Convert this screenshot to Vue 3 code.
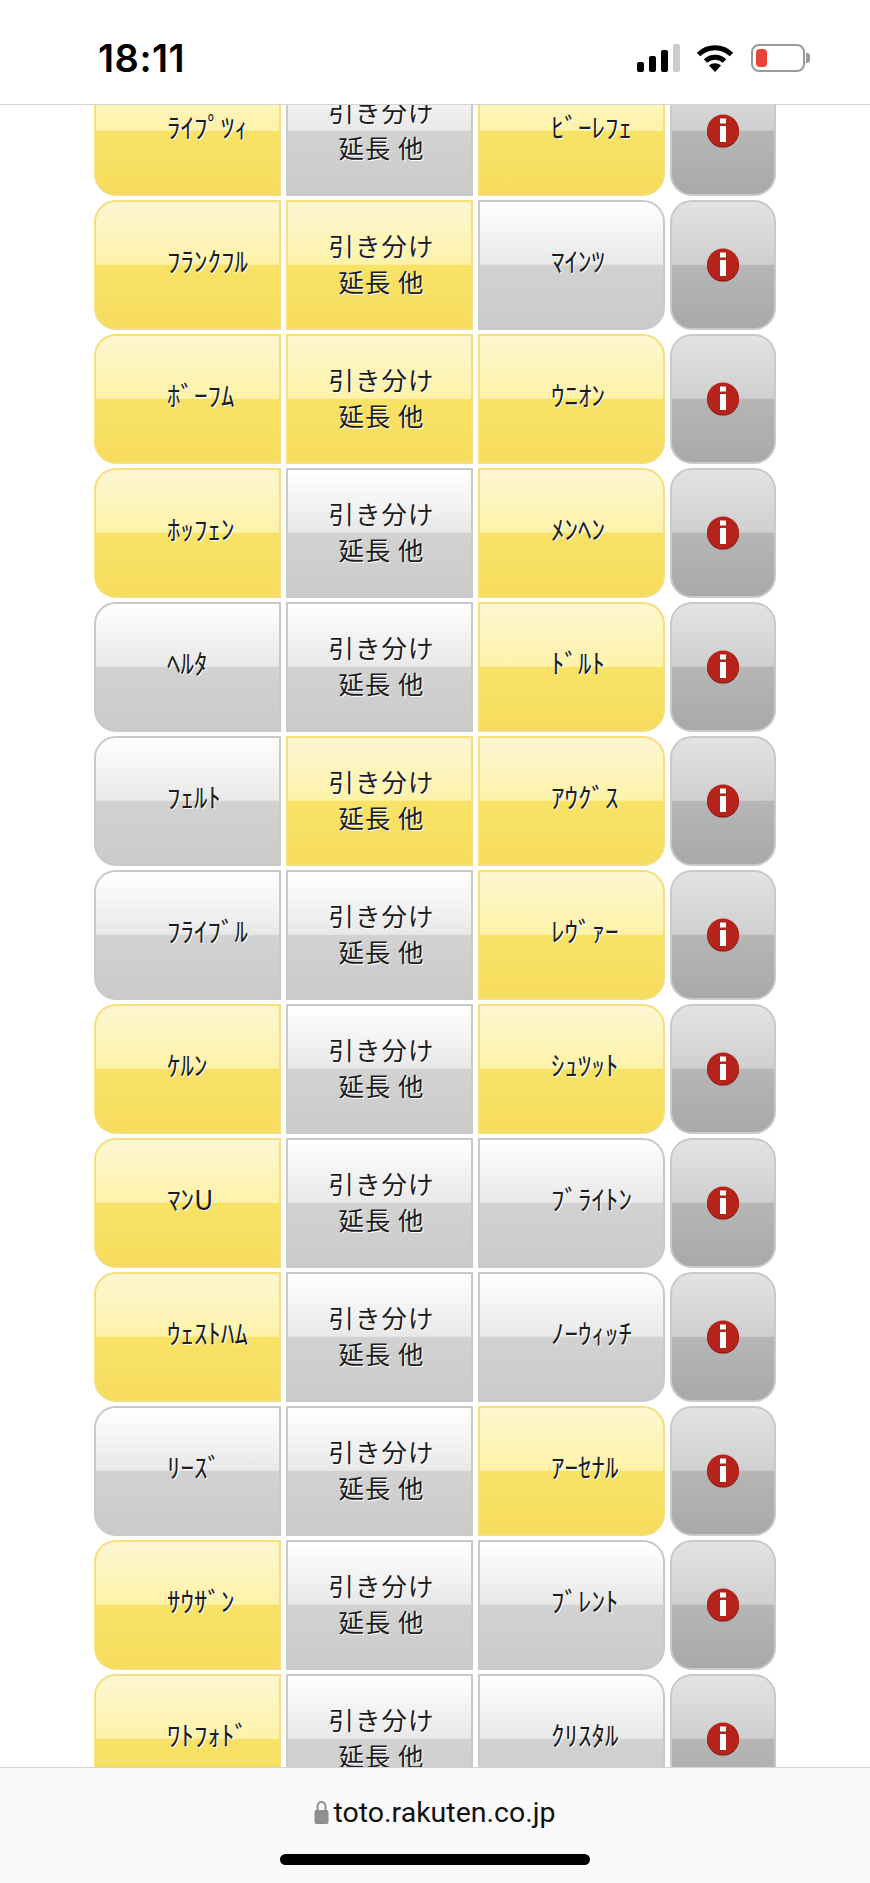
<template>
  <div class="phone">
    <!-- ステータスバー -->
    <header class="status-bar">
      <span class="time">18:11</span>
      <div class="status-icons">
        <svg class="signal" width="44" height="28" viewBox="0 0 44 28">
          <rect x="0" y="18" width="7" height="10" rx="2" fill="#000" />
          <rect x="12" y="12" width="7" height="16" rx="2" fill="#000" />
          <rect x="24" y="6" width="7" height="22" rx="2" fill="#000" />
          <rect x="36" y="0" width="7" height="28" rx="2" fill="#ccc" />
        </svg>
        <svg class="wifi" width="38" height="28" viewBox="0 0 38 28">
          <path d="M2.5 10.5 C12 1.5 26 1.5 35.5 10.5" fill="none" stroke="#000" stroke-width="5" />
          <path d="M9.5 17 C15 12 23 12 28.5 17" fill="none" stroke="#000" stroke-width="5" />
          <path d="M13 21.5 C16.5 18.5 21.5 18.5 25 21.5 L19 28 Z" fill="#000" />
        </svg>
        <div class="battery">
          <div class="battery-level"></div>
        </div>
      </div>
    </header>

    <!-- 試合リスト -->
    <main class="content">
      <div class="match-list">
        <div v-for="match in matches" :key="match.home" class="match">
          <div :class="['cell', 'team', 'home', { on: match.picks[0] }]">{{ match.home }}</div>
          <div :class="['cell', 'draw', { on: match.picks[1] }]">引き分け<br />延長 他</div>
          <div :class="['cell', 'team', 'away', { on: match.picks[2] }]">{{ match.away }}</div>
          <div class="cell info">
            <svg width="34" height="34" viewBox="0 0 34 34">
              <circle cx="17" cy="17.6" r="16" fill="#7d1a12" />
              <circle cx="17" cy="16.6" r="16" fill="#b5231a" />
              <rect x="14" y="4.5" width="6" height="5" fill="#fff" />
              <rect x="14" y="12" width="6" height="16" fill="#fff" />
            </svg>
          </div>
        </div>
      </div>
    </main>

    <!-- アドレスバー -->
    <footer class="address-bar">
      <div class="url">
        <svg width="15" height="24" viewBox="0 0 15 24">
          <path d="M3.5 11 V6.5 C3.5 0.5 11.5 0.5 11.5 6.5 V11" fill="none" stroke="#8e8e93" stroke-width="2" />
          <rect x="0.5" y="10" width="14" height="14" rx="2" fill="#8e8e93" />
        </svg>
        <span>toto.rakuten.co.jp</span>
      </div>
      <div class="home-indicator"></div>
    </footer>
  </div>
</template>

<script setup>
const matches = [
  { home: 'ﾗｲﾌﾟﾂｨ', away: 'ﾋﾞｰﾚﾌｪ', picks: [true, false, true] },
  { home: 'ﾌﾗﾝｸﾌﾙ', away: 'ﾏｲﾝﾂ', picks: [true, true, false] },
  { home: 'ﾎﾞｰﾌﾑ', away: 'ｳﾆｵﾝ', picks: [true, true, true] },
  { home: 'ﾎｯﾌｪﾝ', away: 'ﾒﾝﾍﾝ', picks: [true, false, true] },
  { home: 'ﾍﾙﾀ', away: 'ﾄﾞﾙﾄ', picks: [false, false, true] },
  { home: 'ﾌｪﾙﾄ', away: 'ｱｳｸﾞｽ', picks: [false, true, true] },
  { home: 'ﾌﾗｲﾌﾞﾙ', away: 'ﾚｳﾞｧｰ', picks: [false, false, true] },
  { home: 'ｹﾙﾝ', away: 'ｼｭﾂｯﾄ', picks: [true, false, true] },
  { home: 'ﾏﾝU', away: 'ﾌﾞﾗｲﾄﾝ', picks: [true, false, false] },
  { home: 'ｳｪｽﾄﾊﾑ', away: 'ﾉｰｳｨｯﾁ', picks: [true, false, false] },
  { home: 'ﾘｰｽﾞ', away: 'ｱｰｾﾅﾙ', picks: [false, false, true] },
  { home: 'ｻｳｻﾞﾝ', away: 'ﾌﾞﾚﾝﾄ', picks: [true, false, false] },
  { home: 'ﾜﾄﾌｫﾄﾞ', away: 'ｸﾘｽﾀﾙ', picks: [true, false, false] }
]
</script>

<style scoped>
.phone {
  width: 870px;
  height: 1883px;
  display: flex;
  flex-direction: column;
  background: #fff;
  overflow: hidden;
  font-family: "Noto Sans CJK JP", "Noto Sans", sans-serif;
}

.status-bar {
  height: 104px;
  flex-shrink: 0;
  display: flex;
  justify-content: space-between;
  align-items: flex-start;
  padding: 0 65px 0 98px;
  border-bottom: 1px solid #d4d4d4;
  background: #fff;
}

.time {
  margin-top: 35px;
  font-family: Inter, sans-serif;
  font-size: 38px;
  line-height: 46px;
  font-weight: 600;
  letter-spacing: 0.5px;
  color: #000;
}

.status-icons {
  display: flex;
  align-items: flex-start;
  margin-top: 44px;
}

.signal {
  margin-right: 15px;
}

.wifi {
  margin-right: 17px;
}

.battery {
  position: relative;
  width: 54px;
  height: 28px;
  box-sizing: border-box;
  border: 2px solid #999;
  border-radius: 8px;
  padding: 3px;
}

/* 電池の端子 */
.battery::after {
  content: "";
  position: absolute;
  top: 7px;
  right: -7px;
  width: 4px;
  height: 10px;
  background: #999;
  border-radius: 0 3px 3px 0;
}

.battery-level {
  width: 11px;
  height: 100%;
  background: #ea4436;
  border-radius: 4px;
}

.content {
  flex: 1;
  min-height: 0;
  overflow: hidden;
}

.match-list {
  margin-top: -39px;
  display: flex;
  flex-direction: column;
  gap: 4px;
}

.match {
  display: grid;
  grid-template-columns: 187px 187px 187px 106px;
  column-gap: 5px;
  height: 130px;
  margin-left: 94px;
}

.cell {
  box-sizing: border-box;
  display: flex;
  align-items: center;
  color: #1c1c1c;
  text-shadow: 1px 1px 0 #fff;
  border: 2px solid #c9c9c9;
  background: linear-gradient(to bottom, #ffffff 0%, #e8e8e8 49.5%, #d2d2d2 50%, #cbcbcb 100%);
}

.cell.on {
  border-color: #f5de7c;
  background: linear-gradient(to bottom, #fdf6d2 0%, #fdf3a9 49.5%, #f8e367 50%, #f6dc5e 100%);
}

.team {
  font-size: 27px;
  line-height: 1;
  padding-left: 71px;
  padding-bottom: 9px;
  white-space: nowrap;
}

.home {
  border-radius: 22px 0 0 22px;
}

.away {
  border-radius: 0 22px 22px 0;
}

.draw {
  justify-content: center;
  text-align: center;
  padding-left: 4px;
  padding-bottom: 5px;
  font-size: 25.5px;
  line-height: 36px;
  letter-spacing: 1px;
}

.info {
  justify-content: center;
  border-radius: 22px;
  background: linear-gradient(to bottom, #e3e3e3 0%, #cfcfcf 49.5%, #b6b6b6 50%, #a9a9a9 100%);
}

.address-bar {
  height: 116px;
  flex-shrink: 0;
  box-sizing: border-box;
  display: flex;
  flex-direction: column;
  align-items: center;
  border-top: 1px solid #d4d4d4;
  background: #fafafa;
  position: relative;
  z-index: 1;
}

.url {
  display: flex;
  align-items: center;
  gap: 4px;
  margin-top: 24px;
  height: 40px;
  font-family: Roboto, sans-serif;
  font-size: 28.5px;
  color: #111;
}

.home-indicator {
  width: 310px;
  height: 11px;
  margin-top: 22px;
  background: #000;
  border-radius: 6px;
}
</style>
